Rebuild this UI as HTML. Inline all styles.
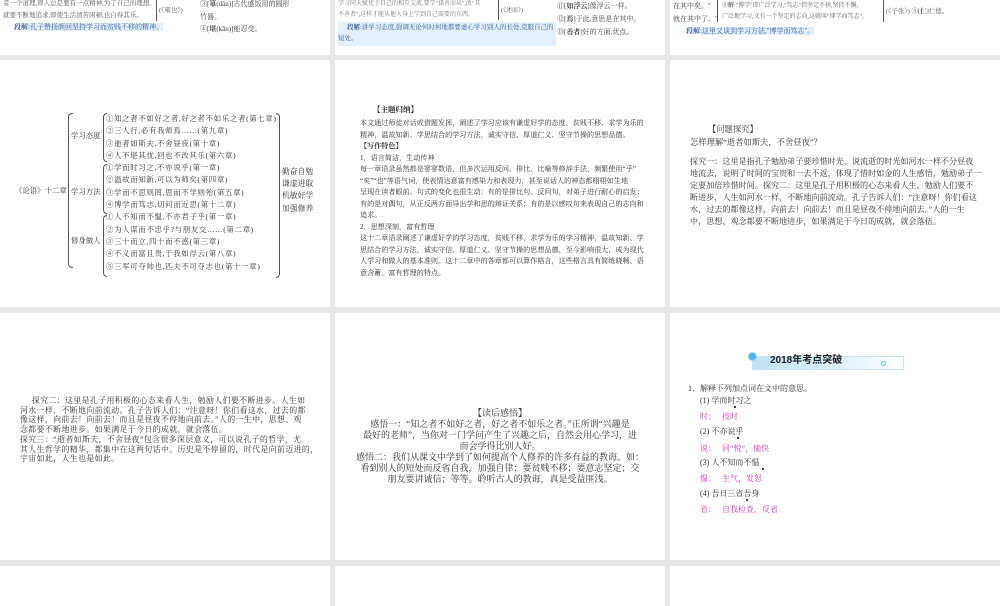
<!DOCTYPE html>
<html><head><meta charset="utf-8">
<style>
*{margin:0;padding:0;box-sizing:border-box}
body{width:1000px;height:600px;background:#e7e7e7;position:relative;overflow:hidden;font-family:"Liberation Serif","Noto Serif CJK SC",serif;color:#333}
.s{position:absolute;background:#fff;overflow:hidden}
.t{position:absolute;white-space:nowrap;line-height:1}
.b{font-weight:bold;color:#222}
.hl{background:#e3f0fb}
.blue{color:#3a5a9a}
.pk{color:#c43aa6}
.brace{position:absolute;border:1px solid #555;border-right:none;border-radius:4px 0 0 4px}
.rbrace{position:absolute;border:1px solid #555;border-left:none;border-radius:0 4px 4px 0}
</style></head><body>

<!-- Row 1 -->
<div class="s" style="left:0;top:0;width:330px;height:55px">
 <div class="t" style="left:3px;top:1px;font-size:6.5px;color:#555">者一个道理,即人总是要有一点精神,为了自己的理想,</div>
 <div class="t" style="left:3px;top:13px;font-size:6.5px;color:#555">就要不断地追求,即使生活清苦困顿,也自得其乐。</div>
 <div class="t" style="left:153px;top:0;width:4px;height:21px;border-right:1px solid #555"></div>
 <div class="t" style="left:159px;top:8px;font-size:6.5px;color:#555">(《雍也》)</div>
 <div class="t" style="left:14px;top:24px;font-size:7px"><span class="b blue">段解</span><span class="hl blue">:孔子赞扬颜回坚持学习而贫贱不移的精神。</span></div>
 <div class="t" style="left:200px;top:1px;font-size:7px;color:#444">③[<b>箪</b>(dān)]古代盛饭用的圆形</div>
 <div class="t" style="left:200px;top:14px;font-size:7px;color:#444">竹器。</div>
 <div class="t" style="left:200px;top:26px;font-size:7px;color:#444">④[<b>堪</b>(kān)]能忍受。</div>
</div>
<div class="s" style="left:335px;top:0;width:330px;height:55px">
 <div class="t" style="left:3px;top:1px;font-size:6px;color:#777">学习同天赋优于自己的相互交流,要学"择善而从",改"其</div>
 <div class="t" style="left:3px;top:12px;font-size:6px;color:#777">不善者",这样才能从他人身上学到自己需要的东西。</div>
 <div class="t" style="left:160px;top:0;width:4px;height:20px;border-right:1px solid #555"></div>
 <div class="t" style="left:166px;top:8px;font-size:6px;color:#555">(《述而》)</div>
 <div class="hl" style="position:absolute;left:3px;top:22px;width:218px;height:24px"></div>
 <div class="t" style="left:12px;top:25px;font-size:6.5px"><span class="b blue">段解</span><span class="blue">:讲学习态度,强调无论何时何地都要虚心学习别人的长处,克服自己的</span></div>
 <div class="t" style="left:3px;top:36px;font-size:6.5px" ><span class="blue">短处。</span></div>
 <div class="t" style="left:222px;top:3px;font-size:7px;color:#444">⑪[<b>如浮云</b>]像浮云一样。</div>
 <div class="t" style="left:222px;top:16px;font-size:7px;color:#444">⑫[<b>焉</b>]于此,意思是在其中。</div>
 <div class="t" style="left:222px;top:29px;font-size:7px;color:#444">⑬[<b>善者</b>]好的方面,优点。</div>
</div>
<div class="s" style="left:670px;top:0;width:330px;height:55px">
 <div class="t" style="left:3px;top:3px;font-size:7px;color:#444">在其中矣。"</div>
 <div class="t" style="left:3px;top:16px;font-size:7px;color:#444">就在其中了。"</div>
 <div class="t" style="left:47px;top:0;width:4px;height:22px;border-left:1px solid #555"></div>
 <div class="t" style="left:52px;top:3px;font-size:6px;color:#666"><b>①解</b>:"博学"即广泛学习,"笃志"指坚定不移,坚持不懈,</div>
 <div class="t" style="left:52px;top:14px;font-size:6px;color:#666">广泛地学习,又有一个坚定的志向,这就叫"博学而笃志"。</div>
 <div class="t" style="left:210px;top:0;width:4px;height:22px;border-right:1px solid #555"></div>
 <div class="t" style="left:216px;top:9px;font-size:6.5px;color:#555">(《子张》) ⑤[<b>仁</b>]仁德。</div>
 <div class="t" style="left:16px;top:28px;font-size:7px"><span class="b blue">段解</span><span class="hl blue">:这里又谈到学习方法,"博学而笃志"。</span></div>
</div>

<!-- Row 2 col1: diagram -->
<div class="s" style="left:0;top:60px;width:330px;height:247px">
 <div class="t" style="left:15px;top:127px;font-size:7.4px">《论语》十二章</div>
 <div class="brace" style="left:68px;top:53px;width:5px;height:155px"></div>
 <div class="t" style="left:71px;top:72px;font-size:7.4px">学习态度</div>
 <div class="t" style="left:71px;top:128px;font-size:7.4px">学习方法</div>
 <div class="t" style="left:71px;top:177px;font-size:7.4px">修身做人</div>
 <div class="brace" style="left:103px;top:53px;width:4px;height:49px"></div>
 <div class="brace" style="left:103px;top:104px;width:4px;height:50px"></div>
 <div class="brace" style="left:103px;top:155px;width:4px;height:62px"></div>
 <div style="position:absolute;left:106px;top:53px;font-size:7.4px;letter-spacing:0.7px;line-height:12.3px;white-space:nowrap">
  ①知之者不如好之者,好之者不如乐之者(第七章)<br>②三人行,必有我师焉……(第九章)<br>③逝者如斯夫,不舍昼夜(第十章)<br>④人不堪其忧,回也不改其乐(第六章)<br>①学而时习之,不亦说乎(第一章)<br>②温故而知新,可以为师矣(第四章)<br>③学而不思则罔,思而不学则殆(第五章)<br>④博学而笃志,切问而近思(第十二章)<br>①人不知而不愠,不亦君子乎(第一章)<br>②为人谋而不忠乎?与朋友交……(第二章)<br>③三十而立,四十而不惑(第三章)<br>④不义而富且贵,于我如浮云(第八章)<br>⑤三军可夺帅也,匹夫不可夺志也(第十一章)
 </div>
 <div class="rbrace" style="left:276px;top:53px;width:4px;height:165px"></div>
 <div style="position:absolute;left:282px;top:106px;font-size:7.8px;line-height:12.2px">勤奋自勉<br>谦虚进取<br>机敏好学<br>加强修养</div>
</div>

<!-- Row 2 col2 -->
<div class="s" style="left:335px;top:60px;width:330px;height:247px">
 <div class="t b" style="left:38px;top:46px;font-size:7.5px">【主题归纳】</div>
 <div style="position:absolute;left:25px;top:58px;font-size:7.1px;line-height:11.5px;white-space:nowrap;color:#333">
 本文通过师徒对话或借题发挥，阐述了学习应该有谦虚好学的态度，贫贱不移、求学为乐的<br>精神，温故知新、学思结合的学习方法，诚实守信、厚道仁义、坚守节操的思想品德。<br><b>【写作特色】</b><br>1．语言简洁，生动传神<br>每一章语录虽然都是寥寥数语，但多次运用反问、排比、比喻等修辞手法，频繁使用“乎”<br>“矣”“也”等语气词，使表情达意富有感染力和表现力，甚至说话人的神态都栩栩如生地<br>呈现在读者眼前。句式的变化也很生动：有的是排比句、反问句，对弟子进行耐心的启发；<br>有的是对偶句，从正反两方面导出学和思的辩证关系；有的是以感叹句来表现自己的志向和<br>追求。<br>2．思想深刻，富有哲理<br>这十二章语录阐述了谦虚好学的学习态度，贫贱不移、求学为乐的学习精神，温故知新、学<br>思结合的学习方法，诚实守信、厚道仁义、坚守节操的思想品德，至今影响很大，成为现代<br>人学习和做人的基本准则。这十二章中的各章都可以算作格言，这些格言具有简练晓畅、语<br>意含蓄、富有哲理的特点。
 </div>
</div>

<!-- Row 2 col3 -->
<div class="s" style="left:670px;top:60px;width:330px;height:247px">
 <div class="t" style="left:38px;top:66px;font-size:8.3px">【问题探究】</div>
 <div class="t" style="left:20px;top:79px;font-size:8.3px">怎样理解“逝者如斯夫，不舍昼夜”？</div>
 <div style="position:absolute;left:20px;top:96px;font-size:8.1px;line-height:12px;white-space:nowrap">
 探究一：这里是指孔子勉励弟子要珍惜时光，说流逝的时光如河水一样不分昼夜<br>地流去，说明了时间的宝贵和一去不返，体现了惜时如金的人生感悟，勉励弟子一<br>定要加倍珍惜时间。探究二：这里是孔子用积极的心态来看人生，勉励人们要不<br>断进步，人生如河水一样，不断地向前流动。孔子告诉人们：“注意呀！你们看这<br>水，过去的都像这样，向前去！向前去！而且是昼夜不停地向前去。”人的一生<br>中，思想、观念都要不断地进步，如果满足于今日的成就，就会落伍。
 </div>
</div>

<!-- Row 3 col1 -->
<div class="s" style="left:0;top:313px;width:330px;height:247px">
 <div style="position:absolute;left:20px;top:83px;font-size:7.9px;letter-spacing:0.4px;line-height:9.7px;white-space:nowrap">
 &nbsp;&nbsp;&nbsp;&nbsp;&nbsp;探究二：这里是孔子用积极的心态来看人生，勉励人们要不断进步。人生如<br>河水一样，不断地向前流动。孔子告诉人们：“注意呀！你们看这水，过去的都<br>像这样，向前去！向前去！而且是昼夜不停地向前去。”人的一生中，思想、观<br>念都要不断地进步。如果满足于今日的成就，就会落伍。<br>探究三：“逝者如斯夫，不舍昼夜”包含很多深层意义，可以说孔子的哲学，尤<br>其人生哲学的精华，都集中在这两句话中。历史是不停留的，时代是向前迈进的，<br>宇宙如此，人生也是如此。
 </div>
</div>

<!-- Row 3 col2 -->
<div class="s" style="left:335px;top:313px;width:330px;height:247px">
 <div style="position:absolute;left:20px;top:95px;width:290px;font-size:9px;line-height:11px;text-align:center;white-space:nowrap">
 【读后感悟】<br>感悟一：“知之者不如好之者，好之者不如乐之者。”正所谓“兴趣是<br>最好的老师”，当你对一门学问产生了兴趣之后，自然会用心学习，进<br>而会学得比别人好。<br>感悟二：我们从课文中学到了如何提高个人修养的许多有益的教诲。如：<br>看到别人的短处而反省自我，加强自律；要贫贱不移；要意志坚定；交<br>朋友要讲诚信；等等。聆听古人的教诲，真是受益匪浅。
 </div>
</div>

<!-- Row 3 col3 -->
<div class="s" style="left:670px;top:313px;width:330px;height:247px">
 <div style="position:absolute;left:82px;top:43px;width:152px;height:14px;background:linear-gradient(90deg,#bfe3f5,#e6f4fb 70%,#fff);border:1px solid #cfe6f2"></div>
 <div style="position:absolute;left:78px;top:39px;width:9px;height:9px;border-radius:50%;background:#4fb2e2;border:1px solid #9bd3ef"></div>
 <div style="position:absolute;left:211px;top:48px;width:5px;height:5px;border-radius:50%;border:1px solid #7cc4e8"></div>
 <div class="t" style="left:100px;top:43px;font-size:10px;font-weight:bold;color:#222;font-family:'Liberation Sans','Noto Sans CJK SC',sans-serif">2018年考点突破</div>
 <div class="t" style="left:18px;top:72px;font-size:8px">1．解释下列加点词在文中的意思。</div>
 <div class="t" style="left:30px;top:84px;font-size:8px">(1) 学而时习之</div>
 <div class="t pk" style="left:30px;top:100px;font-size:8px">时：&nbsp;&nbsp;&nbsp;按时</div>
 <div class="t" style="left:30px;top:115px;font-size:8px">(2) 不亦说乎</div>
 <div class="t pk" style="left:30px;top:132px;font-size:8px">说：&nbsp;&nbsp;&nbsp;同“悦”，愉快</div>
 <div class="t" style="left:30px;top:146px;font-size:8px">(3) 人不知而不愠</div>
 <div class="t pk" style="left:30px;top:162px;font-size:8px">愠：&nbsp;&nbsp;&nbsp;生气，发怒</div>
 <div class="t" style="left:30px;top:177px;font-size:8px">(4) 吾日三省吾身</div>
 <div class="t pk" style="left:30px;top:193px;font-size:8px">省：&nbsp;&nbsp;&nbsp;自我检查、反省</div>
 <div style="position:absolute;left:64px;top:93px;width:2px;height:2px;background:#000;border-radius:50%"></div>
 <div style="position:absolute;left:67px;top:124px;width:2px;height:2px;background:#000;border-radius:50%"></div>
 <div style="position:absolute;left:92px;top:155px;width:2px;height:2px;background:#000;border-radius:50%"></div>
 <div style="position:absolute;left:76px;top:186px;width:2px;height:2px;background:#000;border-radius:50%"></div>
</div>

<!-- Row 4 -->
<div class="s" style="left:0;top:566px;width:330px;height:40px"></div>
<div class="s" style="left:335px;top:566px;width:330px;height:40px"></div>
<div class="s" style="left:670px;top:566px;width:330px;height:40px"></div>
</body></html>
